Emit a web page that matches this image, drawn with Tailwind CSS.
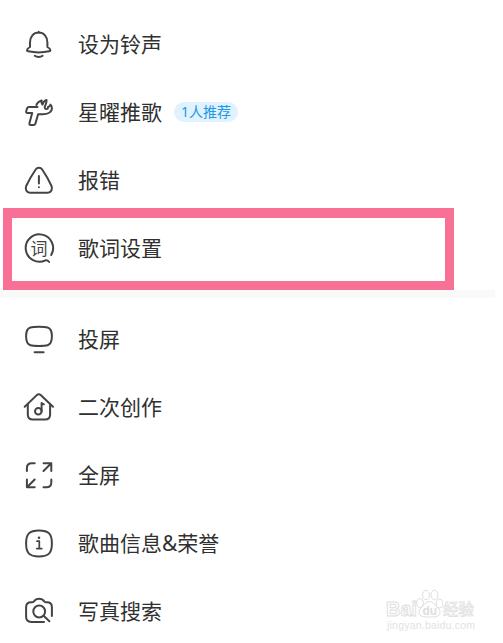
<!DOCTYPE html>
<html lang="zh-CN">
<head>
  <meta charset="UTF-8">
  <meta name="viewport" content="width=device-width, initial-scale=1.0">
  <title>歌曲菜单</title>
  <!-- Tailwind CSS -->
  <script src="https://cdn.jsdelivr.net/npm/@tailwindcss/browser@4"></script>
</head>
<body class="bg-white font-['Noto_Sans','Noto_Sans_CJK_SC',sans-serif] text-[#333]">
  <main class="relative h-[643px] w-[503px] overflow-hidden pt-[10px]">
    <!-- 歌曲操作 -->
    <ul class="text-[21px] leading-[34px] text-[#303030]">
      <li class="flex h-[68px] items-center gap-[21px] pl-[21px]">
        <svg class="size-9 text-[#444]" viewBox="0 0 36 36" fill="none" stroke="currentColor" stroke-width="2" stroke-linecap="round" stroke-linejoin="round">
          <path d="M17.700 5.700v1M9 21v-4.500c0-6 3.500-9.900 8.700-9.900s8.700 3.900 8.700 9.900v4.500c1.800 1 3 2.200 3 3.200 0 .7-.4 1-1.200 1.100-6.500 1.400-14.500 1.400-21 0-.8-.1-1.200-.4-1.200-1.100 0-1 1.200-2.200 3-3.200z"/>
          <path d="M13.800 29.800c2 1.600 5.800 1.600 7.800 0"/>
        </svg>
        <span>设为铃声</span>
      </li>
      <li class="flex h-[68px] items-center pl-[21px]">
        <svg class="size-9 text-[#444]" viewBox="0 0 36 36" fill="none" stroke="currentColor" stroke-width="2" stroke-linecap="round" stroke-linejoin="round">
          <path d="M16.500 13H8c-1.100 0-1.700.5-2 1.500l-.8 2.800c-.3 1 .2 1.700 1.200 1.700h4.800L8.400 29.200c-.3 1 .2 1.700 1.200 1.700h2.900c1 0 1.600-.4 1.900-1.300l2.700-9.400h4.500c5 0 9.300-1.900 9.300-6 0-1.500-.5-2.700-1.400-3.600-.4 1.500-1.300 2.300-2.600 2.300 0 0 .9 2.200-1.400 2.200-1.300 0-2-1-1.700-2.300.6-2.400 2.200-3.600 1.700-6.900-2.500.9-3.500 2.700-4.100 4.700-.8-1-1.200-2.300-.7-4.200-3 1.200-4.800 2.900-5.300 4.600"/>
        </svg>
        <span class="ml-[21px]">星曜推歌</span>
        <span class="ml-3 flex h-[20px] w-[64px] items-center justify-center rounded-full bg-[#e1f2ff] text-[14px] text-[#2298e4]">1人推荐</span>
      </li>
      <li class="flex h-[68px] items-center gap-[21px] pl-[21px]">
        <svg class="size-9 text-[#444]" viewBox="0 0 36 36" fill="none" stroke="currentColor" stroke-width="2" stroke-linecap="round" stroke-linejoin="round">
          <path d="M14.700 7.500c1.600-2.300 4.900-2.300 6.500 0 3.500 5.100 6.500 10.500 9.200 16.200 1.500 3.500-.2 7-3.700 7H9c-3.500 0-5.200-3.500-3.700-7C8 18 11.200 12.600 14.700 7.500z"/>
          <path d="M17.900 14v7.500M17.900 25.200v.1"/>
        </svg>
        <span>报错</span>
      </li>
      <li class="flex h-[68px] items-center gap-[21px] pl-[21px]">
        <svg class="size-9 text-[#444]" viewBox="0 0 36 36" fill="none" stroke="currentColor" stroke-width="2" stroke-linecap="round" stroke-linejoin="round">
          <path d="M30.200 25A13.700 13.700 0 1 0 24.500 30.300c1.400-.5 2.600.4 3.600 1.700"/>
          <text x="9.500" y="24.500" font-size="17" font-weight="400" fill="currentColor" stroke="none">词</text>
        </svg>
        <span>歌词设置</span>
      </li>
    </ul>

    <!-- 分隔条 -->
    <div class="mt-2 h-2 w-[495px] bg-[#f9f9f9]"></div>

    <!-- 更多功能 -->
    <ul class="mt-[7px] text-[21px] leading-[34px] text-[#303030]">
      <li class="flex h-[68px] items-center gap-[21px] pl-[21px]">
        <svg class="size-9 text-[#444]" viewBox="0 0 36 36" fill="none" stroke="currentColor" stroke-width="2" stroke-linecap="round" stroke-linejoin="round">
          <path d="M18 5.800c4 0 6.500.1 8.600.7 3.200.9 4.300 4.200 4.300 8.800s-1.100 8-4.300 8.900c-2.100.6-4.600.7-8.600.7s-6.500-.1-8.600-.7c-3.200-.9-4.300-4.300-4.300-8.900s1.100-7.900 4.300-8.800c2.100-.6 4.600-.7 8.600-.7z"/>
          <path d="M13.600 31.200h9"/>
        </svg>
        <span>投屏</span>
      </li>
      <li class="flex h-[68px] items-center gap-[21px] pl-[21px]">
        <svg class="size-9 text-[#444]" viewBox="0 0 36 36" fill="none" stroke="currentColor" stroke-width="2" stroke-linecap="round" stroke-linejoin="round">
          <path d="M3.700 17.800 15.800 6.100c1.200-1.100 2.700-1.100 3.900 0L32 17.800"/>
          <path d="M6.800 15.500v9.900c0 3.400 1.800 5.100 5 5.100h12.300c3.200 0 5-1.700 5-5.100v-9.900"/>
          <circle cx="17.300" cy="22.200" r="3.300"/>
          <path d="M20.600 22.200v-8.200l2.200 1.300"/>
        </svg>
        <span>二次创作</span>
      </li>
      <li class="flex h-[68px] items-center gap-[21px] pl-[21px]">
        <svg class="size-9 text-[#444]" viewBox="0 0 36 36" fill="none" stroke="currentColor" stroke-width="2" stroke-linecap="round" stroke-linejoin="round">
          <path d="M5.900 14v-3c0-3 1.800-4.800 4.800-4.800h3M22.600 6.200h7.700v7.800M30 6.500l-7.500 7.500"/>
          <path d="M30.300 22.500v3c0 3-1.800 4.800-4.800 4.800h-3M5.900 22.500v7.800h7.800M6.200 30l7.500-7.500"/>
        </svg>
        <span>全屏</span>
      </li>
      <li class="flex h-[68px] items-center gap-[21px] pl-[21px]">
        <svg class="size-9 text-[#444]" viewBox="0 0 36 36" fill="none" stroke="currentColor" stroke-width="2" stroke-linecap="round" stroke-linejoin="round">
          <path d="M18 5.600c9.700 0 12.900 3.200 12.900 12.900S27.700 31.400 18 31.400 5.100 28.200 5.100 18.500 8.300 5.600 18 5.600z"/>
          <path d="M16 16.200h2.300v7.300M15.800 23.600h5" stroke-width="1.700"/>
          <circle cx="18" cy="12.700" r="1.300" fill="currentColor" stroke="none"/>
        </svg>
        <span>歌曲信息&amp;荣誉</span>
      </li>
      <li class="flex h-[68px] items-center gap-[21px] pl-[21px]">
        <svg class="size-9 text-[#444]" viewBox="0 0 36 36" fill="none" stroke="currentColor" stroke-width="2" stroke-linecap="round" stroke-linejoin="round">
          <path d="M23 28.900H10.200c-3.400 0-5.100-1.700-5.100-5.100v-9.600c0-3.200 1.700-4.900 5-4.900h1.100c.8 0 1.200-.4 1.700-1 2.500-3.400 7.900-3.400 10.400 0 .5.600.9 1 1.700 1h.9c3.300 0 5 1.700 5 4.900v8.700"/>
          <circle cx="18.200" cy="18.500" r="5.900"/>
          <path d="m22.600 22.800 5.800 5.400"/>
        </svg>
        <span>写真搜索</span>
      </li>
    </ul>

    <!-- 高亮框 -->
    <div class="absolute left-[3px] top-[208px] h-[82px] w-[451px] border-[9px] border-t-[10px] border-[#f87095]"></div>

    <!-- 水印 -->
    <div class="absolute left-[386px] top-[588px] h-[48px] w-[92px] font-['Liberation_Sans','Noto_Sans_CJK_SC',sans-serif]">
      <svg class="h-full w-full" viewBox="0 0 92 48" fill="#fff" stroke="#dedede" stroke-width="1" font-weight="700">
        <text x="0" y="28" font-size="21" textLength="31" lengthAdjust="spacingAndGlyphs">Bai</text>
        <ellipse cx="34" cy="15" rx="3.300" ry="4.300"/>
        <ellipse cx="40" cy="7" rx="3.500" ry="4.700"/>
        <ellipse cx="48.500" cy="7" rx="3.500" ry="4.700"/>
        <ellipse cx="53.500" cy="15.500" rx="3.300" ry="4.300"/>
        <path d="M43.500 13.500c3 0 4.500 2.200 6.500 4.500s4.500 3.500 4 6.800c-.5 4-4.500 4.200-10.500 4.200S33.500 28.800 33 24.800c-.4-3.300 2-4.500 4-6.800s3.500-4.500 6.500-4.500z"/>
        <text x="36.500" y="26.500" font-size="12" fill="#dedede" stroke="none">du</text>
        <text x="57" y="27" font-size="15.500" font-weight="500" fill="#f4f4f4" stroke-width=".6">经验</text>
        <text x="1" y="41" font-size="10.500" font-weight="400" fill="#e2e2e2" stroke="none" textLength="88">jingyan.baidu.com</text>
      </svg>
    </div>
  </main>
</body>
</html>
